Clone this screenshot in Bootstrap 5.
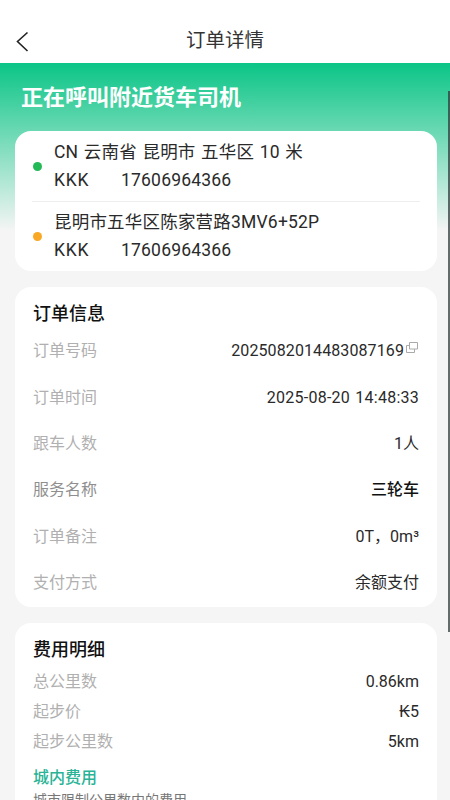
<!DOCTYPE html>
<html lang="zh">
<head>
<meta charset="utf-8">
<title>订单详情</title>
<link href="https://cdn.jsdelivr.net/npm/bootstrap@5.3.0/dist/css/bootstrap.min.css" rel="stylesheet">
<style>
html,body{height:800px;overflow:hidden}
body{background:#f5f5f5;font-family:Roboto,"Noto Sans CJK SC",sans-serif;color:#222;position:relative}
.topbar{height:63px;background:#fff;padding-top:31px}
.topbar-title{font-size:19.5px;line-height:20px;color:#333}
.back-link{left:15px;top:30px;width:16px;height:22px}
.hero{height:168px;background:linear-gradient(180deg,#0bc587 0%,#f5f5f5 100%);padding:21px 21px 0}
.hero-title{font-size:22px;line-height:28px;font-weight:700;color:#fff;margin:0}
.sheet{margin:0 13px 16px 15px;border-radius:16px;background:#fff;border:0}
.route{margin-top:-100px;padding:4px 17px;height:140px}
.route-row{height:62px;flex:none}
.route-line{font-size:17.5px;line-height:28px;color:#2a2a2a;white-space:nowrap;letter-spacing:.2px;word-spacing:1px}
.route-code{display:inline-block;width:67px;letter-spacing:.8px}
.spot{width:9px;height:9px;border-radius:50%;margin-left:1px;margin-right:12px;flex:none}
.spot-start{background:#22b956}
.spot-end{background:#f9a825}
.route-sep{border-top:1px solid #eee;margin:4px 0 3px;flex:none}
.info{height:320px;padding:15px 18px 0}
.sheet-title{font-size:18px;line-height:24px;font-weight:500;color:#111;margin:0}
.info-row{height:46.4px;font-size:16px;color:#2a2a2a}
.info-rows{margin-top:2px}
.info-key{color:#b0b0b0}
.key-strong{color:#8f8f8f}
.val-strong{font-weight:500;color:#111}
.val-order{letter-spacing:.1px}
.val-date{letter-spacing:.25px;word-spacing:1px}
.copy-ico{width:14px;height:14px;margin-top:-7px;margin-left:1px}
.fee{height:400px;padding:15px 18px 0}
.fee-row{height:30px;font-size:16px;line-height:30px;color:#2a2a2a}
.fee-rows{margin-top:5px}
.fee-head{font-size:16px;line-height:22px;font-weight:500;color:#2ab396;margin-top:10px}
.fee-sub{font-size:14px;line-height:20px;color:#777;margin-top:1px}
.scroll-thumb{right:0;top:91px;width:2px;height:541px;background:rgba(50,60,60,.75)}
</style>
</head>
<body>
<header class="topbar text-center position-relative">
  <svg class="back-link position-absolute" viewBox="0 0 16 22" fill="none" stroke="#222" stroke-width="1.6" aria-hidden="true"><path d="M12.5 2.5 2.5 11.5l10 9.5"/></svg>
  <div class="topbar-title">订单详情</div>
</header>
<section class="hero">
  <h1 class="hero-title">正在呼叫附近货车司机</h1>
</section>
<main>
  <div class="card sheet route">
    <div class="route-row d-flex align-items-center">
      <span class="spot spot-start"></span>
      <div>
        <div class="route-line">CN 云南省 昆明市 五华区 10 米</div>
        <div class="route-line"><span class="route-code">KKK</span>17606964366</div>
      </div>
    </div>
    <div class="route-sep"></div>
    <div class="route-row d-flex align-items-center">
      <span class="spot spot-end"></span>
      <div>
        <div class="route-line">昆明市五华区陈家营路3MV6+52P</div>
        <div class="route-line"><span class="route-code">KKK</span>17606964366</div>
      </div>
    </div>
  </div>
  <div class="card sheet info">
    <h2 class="sheet-title">订单信息</h2>
    <div class="info-rows">
      <div class="info-row d-flex justify-content-between align-items-center"><span class="info-key">订单号码</span><span class="d-flex align-items-center val-order">2025082014483087169<svg class="copy-ico" viewBox="0 0 14 14" fill="none" stroke="#aaa" stroke-width="1" aria-hidden="true"><path d="M4.5 1.5h8v6.500h-8z"/><path d="M4.500 4.500H1.500v7h8V8"/></svg></span></div>
      <div class="info-row d-flex justify-content-between align-items-center"><span class="info-key">订单时间</span><span class="val-date">2025-08-20 14:48:33</span></div>
      <div class="info-row d-flex justify-content-between align-items-center"><span class="info-key">跟车人数</span><span>1人</span></div>
      <div class="info-row d-flex justify-content-between align-items-center"><span class="key-strong">服务名称</span><span class="val-strong">三轮车</span></div>
      <div class="info-row d-flex justify-content-between align-items-center"><span class="info-key">订单备注</span><span>0T，0m³</span></div>
      <div class="info-row d-flex justify-content-between align-items-center"><span class="info-key">支付方式</span><span>余额支付</span></div>
    </div>
  </div>
  <div class="card sheet fee">
    <h2 class="sheet-title">费用明细</h2>
    <div class="fee-rows">
      <div class="fee-row d-flex justify-content-between"><span class="info-key">总公里数</span><span>0.86km</span></div>
      <div class="fee-row d-flex justify-content-between"><span class="info-key">起步价</span><span>₭5</span></div>
      <div class="fee-row d-flex justify-content-between"><span class="info-key">起步公里数</span><span>5km</span></div>
    </div>
    <div class="fee-head">城内费用</div>
    <div class="fee-sub">城市限制公里数内的费用</div>
  </div>
</main>
<div class="scroll-thumb position-absolute"></div>
<script src="https://cdn.jsdelivr.net/npm/bootstrap@5.3.0/dist/js/bootstrap.bundle.min.js"></script>
</body>
</html>
